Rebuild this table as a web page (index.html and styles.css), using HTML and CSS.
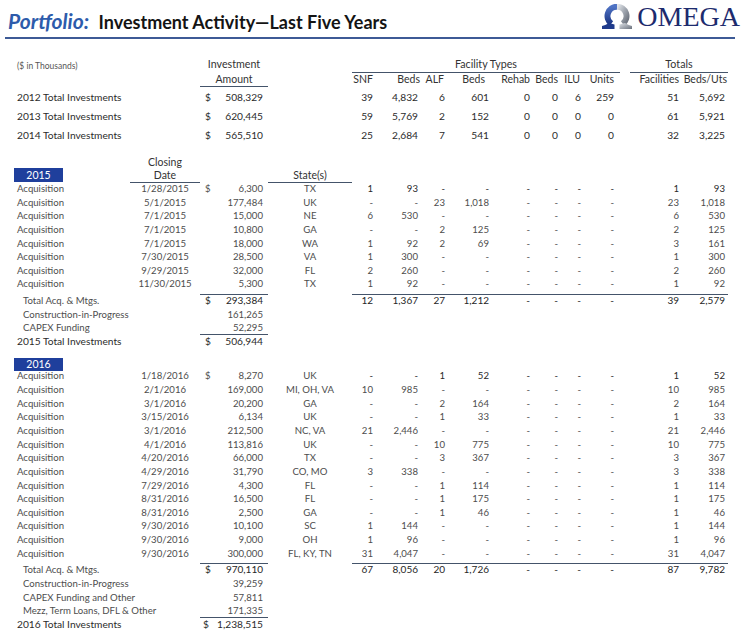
FILE: index.html
```html
<!DOCTYPE html>
<html>
<head>
<meta charset="utf-8">
<link rel="stylesheet" href="styles.css">
</head>
<body>
<header class="top">
  <h1 class="title"><em>Portfolio:</em> Investment Activity—Last Five Years</h1>
  <div class="logo">
    <svg class="omega" width="36" height="26" viewBox="0 0 36 26">
      <defs>
        <linearGradient id="blu" x1="0" y1="0" x2="0" y2="1">
          <stop offset="0" stop-color="#4f73c4"/>
          <stop offset="1" stop-color="#1c3786"/>
        </linearGradient>
        <linearGradient id="sil" x1="0" y1="0" x2="1" y2="1">
          <stop offset="0" stop-color="#e3e6ea"/>
          <stop offset="0.5" stop-color="#a3a9b2"/>
          <stop offset="1" stop-color="#6b727d"/>
        </linearGradient>
      </defs>
      <path d="M12.3 19.6 A9.3 9.3 0 0 1 18 2.8" fill="none" stroke="url(#blu)" stroke-width="6"/>
      <path d="M18 2.8 A9.3 9.3 0 0 1 23.7 19.6" fill="none" stroke="url(#sil)" stroke-width="6"/>
      <path d="M3 25 L15.5 25 L15.5 20.5 L10 19 Q6 21.5 3 22 Z" fill="#1f3b8c"/>
      <path d="M33 25 L20.5 25 L20.5 20.5 L26 19 Q30 21.5 33 22 Z" fill="url(#sil)"/>
    </svg>
    <span class="brand">OMEGA</span>
  </div>
</header>
<div class="rule"></div>

<main class="sheet">
  <div class="row h1">
    <span class="thou">($ in Thousands)</span><span class="c">Investment</span><span></span>
    <span class="grp g8">Facility Types</span><span></span><span class="grp g2">Totals</span>
  </div>
  <div class="row h2">
    <span></span><span></span><span class="c line">Amount</span><span></span>
    <span>SNF</span><span>Beds</span><span>ALF</span><span>Beds</span><span>Rehab</span><span>Beds</span><span>ILU</span><span>Units</span><span></span><span>Facilities</span><span>Beds/Uts</span>
  </div>

  <div class="row sum first"><span>2012 Total Investments</span><span></span><span class="amt"><i>$</i>508,329</span><span></span><span>39</span><span>4,832</span><span>6</span><span>601</span><span>0</span><span>0</span><span>6</span><span>259</span><span></span><span>51</span><span>5,692</span></div>
  <div class="row sum"><span>2013 Total Investments</span><span></span><span class="amt"><i>$</i>620,445</span><span></span><span>59</span><span>5,769</span><span>2</span><span>152</span><span>0</span><span>0</span><span>0</span><span>0</span><span></span><span>61</span><span>5,921</span></div>
  <div class="row sum"><span>2014 Total Investments</span><span></span><span class="amt"><i>$</i>565,510</span><span></span><span>25</span><span>2,684</span><span>7</span><span>541</span><span>0</span><span>0</span><span>0</span><span>0</span><span></span><span>32</span><span>3,225</span></div>

  <div class="row cap"><span></span><span class="c">Closing</span></div>
  <div class="row yr"><span><b class="box">2015</b></span><span class="c line">Date</span><span></span><span class="c line">State(s)</span></div>

  <div class="row d hi"><span>Acquisition</span><span class="c">1/28/2015</span><span class="amt"><i>$</i>6,300</span><span class="c">TX</span><span>1</span><span>93</span><span>-</span><span>-</span><span>-</span><span>-</span><span>-</span><span>-</span><span></span><span>1</span><span>93</span></div>
  <div class="row d"><span>Acquisition</span><span class="c">5/1/2015</span><span class="amt">177,484</span><span class="c">UK</span><span>-</span><span>-</span><span>23</span><span>1,018</span><span>-</span><span>-</span><span>-</span><span>-</span><span></span><span>23</span><span>1,018</span></div>
  <div class="row d"><span>Acquisition</span><span class="c">7/1/2015</span><span class="amt">15,000</span><span class="c">NE</span><span>6</span><span>530</span><span>-</span><span>-</span><span>-</span><span>-</span><span>-</span><span>-</span><span></span><span>6</span><span>530</span></div>
  <div class="row d"><span>Acquisition</span><span class="c">7/1/2015</span><span class="amt">10,800</span><span class="c">GA</span><span>-</span><span>-</span><span>2</span><span>125</span><span>-</span><span>-</span><span>-</span><span>-</span><span></span><span>2</span><span>125</span></div>
  <div class="row d"><span>Acquisition</span><span class="c">7/1/2015</span><span class="amt">18,000</span><span class="c">WA</span><span>1</span><span>92</span><span>2</span><span>69</span><span>-</span><span>-</span><span>-</span><span>-</span><span></span><span>3</span><span>161</span></div>
  <div class="row d"><span>Acquisition</span><span class="c">7/30/2015</span><span class="amt">28,500</span><span class="c">VA</span><span>1</span><span>300</span><span>-</span><span>-</span><span>-</span><span>-</span><span>-</span><span>-</span><span></span><span>1</span><span>300</span></div>
  <div class="row d"><span>Acquisition</span><span class="c">9/29/2015</span><span class="amt">32,000</span><span class="c">FL</span><span>2</span><span>260</span><span>-</span><span>-</span><span>-</span><span>-</span><span>-</span><span>-</span><span></span><span>2</span><span>260</span></div>
  <div class="row d"><span>Acquisition</span><span class="c">11/30/2015</span><span class="amt">5,300</span><span class="c">TX</span><span>1</span><span>92</span><span>-</span><span>-</span><span>-</span><span>-</span><span>-</span><span>-</span><span></span><span>1</span><span>92</span></div>
  <div class="row d tot sub"><span>Total Acq. &amp; Mtgs.</span><span></span><span class="amt"><i>$</i>293,384</span><span></span><span>12</span><span>1,367</span><span>27</span><span>1,212</span><span>-</span><span>-</span><span>-</span><span>-</span><span></span><span>39</span><span>2,579</span></div>
  <div class="row d sub"><span>Construction-in-Progress</span><span></span><span class="amt">161,265</span></div>
  <div class="row d sub"><span>CAPEX Funding</span><span></span><span class="amt ul">52,295</span></div>
  <div class="row grand"><span>2015 Total Investments</span><span></span><span class="amt"><i>$</i>506,944</span></div>

  <div class="row yr yr2"><span><b class="box">2016</b></span></div>

  <div class="row d hi"><span>Acquisition</span><span class="c">1/18/2016</span><span class="amt"><i>$</i>8,270</span><span class="c">UK</span><span>-</span><span>-</span><span>1</span><span>52</span><span>-</span><span>-</span><span>-</span><span>-</span><span></span><span>1</span><span>52</span></div>
  <div class="row d"><span>Acquisition</span><span class="c">2/1/2016</span><span class="amt">169,000</span><span class="c">MI, OH, VA</span><span>10</span><span>985</span><span>-</span><span>-</span><span>-</span><span>-</span><span>-</span><span>-</span><span></span><span>10</span><span>985</span></div>
  <div class="row d"><span>Acquisition</span><span class="c">3/1/2016</span><span class="amt">20,200</span><span class="c">GA</span><span>-</span><span>-</span><span>2</span><span>164</span><span>-</span><span>-</span><span>-</span><span>-</span><span></span><span>2</span><span>164</span></div>
  <div class="row d"><span>Acquisition</span><span class="c">3/15/2016</span><span class="amt">6,134</span><span class="c">UK</span><span>-</span><span>-</span><span>1</span><span>33</span><span>-</span><span>-</span><span>-</span><span>-</span><span></span><span>1</span><span>33</span></div>
  <div class="row d"><span>Acquisition</span><span class="c">3/1/2016</span><span class="amt">212,500</span><span class="c">NC, VA</span><span>21</span><span>2,446</span><span>-</span><span>-</span><span>-</span><span>-</span><span>-</span><span>-</span><span></span><span>21</span><span>2,446</span></div>
  <div class="row d"><span>Acquisition</span><span class="c">4/1/2016</span><span class="amt">113,816</span><span class="c">UK</span><span>-</span><span>-</span><span>10</span><span>775</span><span>-</span><span>-</span><span>-</span><span>-</span><span></span><span>10</span><span>775</span></div>
  <div class="row d"><span>Acquisition</span><span class="c">4/20/2016</span><span class="amt">66,000</span><span class="c">TX</span><span>-</span><span>-</span><span>3</span><span>367</span><span>-</span><span>-</span><span>-</span><span>-</span><span></span><span>3</span><span>367</span></div>
  <div class="row d"><span>Acquisition</span><span class="c">4/29/2016</span><span class="amt">31,790</span><span class="c">CO, MO</span><span>3</span><span>338</span><span>-</span><span>-</span><span>-</span><span>-</span><span>-</span><span>-</span><span></span><span>3</span><span>338</span></div>
  <div class="row d"><span>Acquisition</span><span class="c">7/29/2016</span><span class="amt">4,300</span><span class="c">FL</span><span>-</span><span>-</span><span>1</span><span>114</span><span>-</span><span>-</span><span>-</span><span>-</span><span></span><span>1</span><span>114</span></div>
  <div class="row d"><span>Acquisition</span><span class="c">8/31/2016</span><span class="amt">16,500</span><span class="c">FL</span><span>-</span><span>-</span><span>1</span><span>175</span><span>-</span><span>-</span><span>-</span><span>-</span><span></span><span>1</span><span>175</span></div>
  <div class="row d"><span>Acquisition</span><span class="c">8/31/2016</span><span class="amt">2,500</span><span class="c">GA</span><span>-</span><span>-</span><span>1</span><span>46</span><span>-</span><span>-</span><span>-</span><span>-</span><span></span><span>1</span><span>46</span></div>
  <div class="row d"><span>Acquisition</span><span class="c">9/30/2016</span><span class="amt">10,100</span><span class="c">SC</span><span>1</span><span>144</span><span>-</span><span>-</span><span>-</span><span>-</span><span>-</span><span>-</span><span></span><span>1</span><span>144</span></div>
  <div class="row d"><span>Acquisition</span><span class="c">9/30/2016</span><span class="amt">9,000</span><span class="c">OH</span><span>1</span><span>96</span><span>-</span><span>-</span><span>-</span><span>-</span><span>-</span><span>-</span><span></span><span>1</span><span>96</span></div>
  <div class="row d"><span>Acquisition</span><span class="c">9/30/2016</span><span class="amt">300,000</span><span class="c">FL, KY, TN</span><span>31</span><span>4,047</span><span>-</span><span>-</span><span>-</span><span>-</span><span>-</span><span>-</span><span></span><span>31</span><span>4,047</span></div>
  <div class="row d tot sub"><span>Total Acq. &amp; Mtgs.</span><span></span><span class="amt"><i>$</i>970,110</span><span></span><span>67</span><span>8,056</span><span>20</span><span>1,726</span><span>-</span><span>-</span><span>-</span><span>-</span><span></span><span>87</span><span>9,782</span></div>
  <div class="row d sub"><span>Construction-in-Progress</span><span></span><span class="amt">39,259</span></div>
  <div class="row d sub"><span>CAPEX Funding and Other</span><span></span><span class="amt">57,811</span></div>
  <div class="row d sub"><span>Mezz, Term Loans, DFL &amp; Other</span><span></span><span class="amt ul">171,335</span></div>
  <div class="row grand"><span>2016 Total Investments</span><span></span><span class="amt tight"><i>$</i>1,238,515</span></div>
</main>
</body>
</html>
```

FILE: styles.css
```css
* {
  box-sizing: border-box;
  margin: 0;
  padding: 0;
}

body {
  margin: 0;
  width: 749px;
  height: 638px;
  overflow: hidden;
  background: #ffffff;
  font-family: Lato, "Liberation Sans", sans-serif;
  color: #444;
}

/* ---------- header ---------- */
.top {
  display: flex;
  justify-content: space-between;
  align-items: flex-start;
  height: 37px;
  padding-left: 8px;
  padding-right: 9px;
}

.title {
  font-size: 18px;
  font-weight: 700;
  color: #141414;
  padding-top: 9px;
  line-height: 23px;
  white-space: nowrap;
}

.title em {
  color: #2d5bab;
  font-size: 21px;
  font-style: italic;
  margin-right: 5px;
}

.logo {
  display: flex;
  align-items: center;
  gap: 2px;
  padding-top: 4px;
}

.omega {
  display: block;
}

.brand {
  font-family: "Liberation Serif", serif;
  font-size: 28px;
  line-height: 26px;
  color: #1d2b6e;
}

.rule {
  height: 2px;
  background: #3d5a96;
  margin: 0 14px 0 5px;
}

/* ---------- sheet ---------- */
.sheet {
  padding-top: 18px;
}

.row {
  display: grid;
  grid-template-columns: 116px 70px 68px 84px 24px 45px 27px 44px 41px 28px 23px 36px 10px 52px 46px;
  padding-left: 14px;
  white-space: nowrap;
}

.row > span:first-child {
  padding-left: 3px;
}

.row > span:nth-child(n+5) {
  text-align: right;
  padding-right: 3px;
}

.row > span:nth-child(12) {
  padding-right: 6px;
}

.c {
  text-align: center;
}

.amt {
  display: flex;
  justify-content: flex-end;
  padding: 0 5px;
}

.amt i {
  font-style: normal;
  margin-right: auto;
}

.amt.tight {
  padding-left: 3px;
}

.line,
.ul {
  box-shadow: inset 0 -1px 0 #44546a;
}

/* header rows */
.h1 {
  height: 15px;
  line-height: 14px;
  font-size: 10.7px;
  color: #333;
}

.h1 .thou {
  grid-column: span 2;
  font-size: 8.5px;
  color: #555;
  padding-top: 2px;
}

.row > span.grp {
  text-align: center;
  padding-right: 0;
  box-shadow: inset 0 -1px 0 #44546a;
}

.g8 {
  grid-column: span 8;
}

.g2 {
  grid-column: span 2;
}

.h2 {
  height: 15px;
  line-height: 14px;
  font-size: 10.5px;
  color: #333;
}

.h2 > span:nth-child(6) { padding-right: 1px; }
.h2 > span:nth-child(7) { padding-right: 4px; }
.h2 > span:nth-child(8) { padding-right: 7px; }
.h2 > span:nth-child(11) { padding-right: 4px; }
.h2 > span:nth-child(14) { padding-right: 3px; }
.h2 > span:nth-child(15) { padding-right: 1px; }

/* summary rows */
.sum {
  height: 19px;
  line-height: 19px;
  font-size: 10.2px;
  color: #2b2b2b;
}

.sum.first {
  margin-top: 1px;
}

.cap {
  height: 13px;
  line-height: 14px;
  margin-top: 10px;
  font-size: 10.5px;
  color: #333;
}

.yr {
  height: 14px;
  line-height: 15px;
  font-size: 10.5px;
  color: #333;
}

.row.yr > span:first-child {
  padding-left: 0;
}

.box {
  display: block;
  width: 49px;
  height: 14px;
  line-height: 14px;
  background: #1f3f9c;
  color: #ffffff;
  text-align: center;
  font-weight: 400;
}

.yr2 {
  margin-top: 9.2px;
  height: 11.5px;
}

.yr2 .box {
  height: 13px;
  line-height: 13px;
}

/* detail rows */
.d {
  height: 13.65px;
  line-height: 13.65px;
  font-size: 9.6px;
  color: #4d4d4d;
}

.d.hi > span:nth-child(n+5) {
  color: #2a2a2a;
}

.sub > span:first-child {
  padding-left: 9px;
}

.tot {
  margin-top: 3px;
}

.tot > span:nth-child(n+2) {
  color: #262626;
  font-size: 10px;
}

.tot > span:nth-child(3),
.tot > span:nth-child(n+5) {
  box-shadow: inset 0 1px 0 #44546a;
}

.grand {
  height: 13.65px;
  line-height: 13.65px;
  font-size: 10.2px;
  color: #2b2b2b;
}
```
